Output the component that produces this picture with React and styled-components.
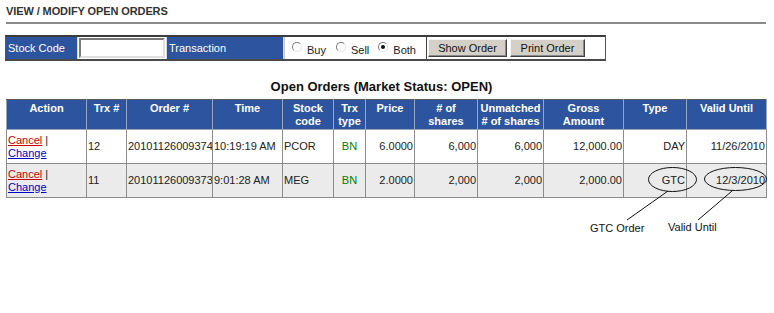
import React from "react";
import styled, { createGlobalStyle } from "styled-components";

const GlobalStyle = createGlobalStyle`
  html, body {
    margin: 0;
    padding: 0;
    background: #ffffff;
  }
  body {
    font-family: "Liberation Sans", Arial, sans-serif;
    font-size: 11px;
    color: #222;
  }
`;

const BLUE = "#2d559f";

const Page = styled.div`
  position: relative;
  width: 774px;
  height: 313px;
  padding: 5px 8px 0 5px;
  box-sizing: border-box;
`;

const PageTitle = styled.h1`
  margin: 0 0 0 1px;
  font-size: 11px;
  line-height: 13px;
  font-weight: bold;
  color: #333;
  letter-spacing: -0.1px;
`;

const Rule = styled.hr`
  margin: 4px 0 0 1px;
  height: 2px;
  border: none;
  background: #8a8a8a;
`;

const FilterBar = styled.div`
  display: flex;
  align-items: stretch;
  margin-top: 11px;
  width: 601px;
  height: 26px;
  box-sizing: border-box;
  border: 1px solid #555;
  border-top: 2px solid #3c3c3c;
  border-bottom: 2px solid #4a4a4a;
  background: #fff;
`;

const FilterLabel = styled.div`
  width: ${(p) => p.$w}px;
  background: ${BLUE};
  color: #fff;
  display: flex;
  align-items: center;
  padding-left: 2px;
  box-sizing: border-box;
  border-right: 1px solid #d8d8d8;
`;

const InputCell = styled.div`
  width: 89px;
  display: flex;
  align-items: center;
  padding: 0 1px;
  box-sizing: border-box;
  border-right: 1px solid #d8d8d8;
`;

const TextInput = styled.input`
  width: 86px;
  height: 20px;
  box-sizing: border-box;
  border: 2px solid;
  border-color: #7a7a7a #e0e0e0 #e0e0e0 #7a7a7a;
  padding: 0 2px;
  font: inherit;
  outline: none;
`;

const RadioCell = styled.div`
  width: 143px;
  display: flex;
  align-items: center;
  gap: 0;
  padding-left: 7px;
  box-sizing: border-box;
  border-left: 1px solid #c8c8c8;
  border-right: 1px solid #444;
`;

const RadioLabel = styled.label`
  display: flex;
  align-items: center;
  margin-right: ${(p) => p.$mr}px;
  color: #222;
`;

const RadioDot = styled.span`
  position: relative;
  width: 10px;
  height: 10px;
  border-radius: 50%;
  box-sizing: border-box;
  border: 1px solid;
  border-color: #7c7c7c #e4e4e4 #e4e4e4 #7c7c7c;
  background: #fff;
  margin: -3px 5px 0 0;
  &::after {
    content: "";
    display: ${(p) => (p.$checked ? "block" : "none")};
    position: absolute;
    left: 2px;
    top: 2px;
    width: 4px;
    height: 4px;
    border-radius: 50%;
    background: #111;
  }
`;

const RadioText = styled.span`
  padding-top: 4px;
`;

const ButtonCell = styled.div`
  display: flex;
  align-items: center;
  gap: 3px;
  padding-left: 1px;
`;

const ClassicButton = styled.button`
  width: ${(p) => p.$w}px;
  height: 18px;
  padding: 0;
  font: inherit;
  font-size: 11px;
  color: #111;
  background: #d4d0c8;
  border: 1px solid;
  border-color: #f4f4f4 #404040 #404040 #f4f4f4;
  box-shadow: inset -1px -1px 0 #8a8a8a;
`;

const SectionTitle = styled.h2`
  margin: 18px 0 0 0;
  padding-right: 8px;
  text-align: center;
  font-size: 13px;
  line-height: 16px;
  font-weight: bold;
  color: #111;
`;

const Grid = styled.table`
  margin: 4px 0 0 1px;
  width: 760px;
  border-collapse: collapse;
  table-layout: fixed;
  border: 1px solid #5a5a5a;
`;

const Head = styled.th`
  background: ${BLUE};
  color: #fff;
  font-weight: bold;
  font-size: 11px;
  line-height: 13px;
  vertical-align: top;
  text-align: center;
  padding: 2px 1px 0;
  height: 27px;
  border: 1px solid #9aa5b8;
  border-top-color: #5a5a5a;
`;

const Cell = styled.td`
  height: 33px;
  padding: 0 1px;
  text-align: ${(p) => p.$align || "left"};
  color: ${(p) => p.$color || "#222"};
  vertical-align: middle;
  white-space: nowrap;
  overflow: hidden;
  line-height: 13px;
  border: 1px solid #8c8c8c;
`;

const Row = styled.tr`
  background: ${(p) => (p.$shade ? "#ebebeb" : "#ffffff")};
`;

const CancelLink = styled.a`
  color: #cc0000;
  text-decoration: underline;
`;

const ChangeLink = styled.a`
  color: #0000cc;
  text-decoration: underline;
`;

const Overlay = styled.svg`
  position: absolute;
  left: 0;
  top: 0;
  pointer-events: none;
`;

const Callout = styled.span`
  position: absolute;
  left: ${(p) => p.$x}px;
  top: ${(p) => p.$y}px;
  font-size: 11px;
  color: #111;
`;

const columns = [
  { w: 80, label: ["Action"] },
  { w: 40, label: ["Trx #"] },
  { w: 86, label: ["Order #"] },
  { w: 70, label: ["Time"] },
  { w: 51, label: ["Stock", "code"] },
  { w: 32, label: ["Trx", "type"] },
  { w: 49, label: ["Price"] },
  { w: 63, label: ["# of", "shares"] },
  { w: 66, label: ["Unmatched", "# of shares"] },
  { w: 80, label: ["Gross", "Amount"] },
  { w: 63, label: ["Type"] },
  { w: 80, label: ["Valid Until"] },
];

const orders = [
  {
    trx: "12",
    order: "20101126009374",
    time: "10:19:19 AM",
    code: "PCOR",
    type: "BN",
    price: "6.0000",
    shares: "6,000",
    unmatched: "6,000",
    gross: "12,000.00",
    kind: "DAY",
    valid: "11/26/2010",
  },
  {
    trx: "11",
    order: "20101126009373",
    time: "9:01:28 AM",
    code: "MEG",
    type: "BN",
    price: "2.0000",
    shares: "2,000",
    unmatched: "2,000",
    gross: "2,000.00",
    kind: "GTC",
    valid: "12/3/2010",
  },
];

export default function App() {
  return (
    <>
      <GlobalStyle />
      <Page>
        <PageTitle>VIEW / MODIFY OPEN ORDERS</PageTitle>
        <Rule />

        <FilterBar>
          <FilterLabel $w={72}>Stock Code</FilterLabel>
          <InputCell>
            <TextInput type="text" />
          </InputCell>
          <FilterLabel $w={117}>Transaction</FilterLabel>
          <RadioCell>
            <RadioLabel $mr={10}>
              <RadioDot />
              <RadioText>Buy</RadioText>
            </RadioLabel>
            <RadioLabel $mr={9}>
              <RadioDot />
              <RadioText>Sell</RadioText>
            </RadioLabel>
            <RadioLabel $mr={0}>
              <RadioDot $checked />
              <RadioText>Both</RadioText>
            </RadioLabel>
          </RadioCell>
          <ButtonCell>
            <ClassicButton $w={79}>Show Order</ClassicButton>
            <ClassicButton $w={75}>Print Order</ClassicButton>
          </ButtonCell>
        </FilterBar>

        <SectionTitle>Open Orders (Market Status: OPEN)</SectionTitle>

        <Grid>
          <colgroup>
            {columns.map((c, i) => (
              <col key={i} style={{ width: c.w }} />
            ))}
          </colgroup>
          <thead>
            <tr>
              {columns.map((c, i) => (
                <Head key={i}>
                  {c.label.map((l, j) => (
                    <React.Fragment key={j}>
                      {j > 0 && <br />}
                      {l}
                    </React.Fragment>
                  ))}
                </Head>
              ))}
            </tr>
          </thead>
          <tbody>
            {orders.map((o, i) => (
              <Row key={o.order} $shade={i % 2 === 1}>
                <Cell>
                  <CancelLink>Cancel</CancelLink> |<br />
                  <ChangeLink>Change</ChangeLink>
                </Cell>
                <Cell>{o.trx}</Cell>
                <Cell>{o.order}</Cell>
                <Cell>{o.time}</Cell>
                <Cell>{o.code}</Cell>
                <Cell $align="center" $color="#008000">
                  {o.type}
                </Cell>
                <Cell $align="right">{o.price}</Cell>
                <Cell $align="right">{o.shares}</Cell>
                <Cell $align="right">{o.unmatched}</Cell>
                <Cell $align="right">{o.gross}</Cell>
                <Cell $align="right">{o.kind}</Cell>
                <Cell $align="right">{o.valid}</Cell>
              </Row>
            ))}
          </tbody>
        </Grid>

        <Overlay width="774" height="313" viewBox="0 0 774 313">
          <ellipse cx="672.5" cy="179.5" rx="24" ry="12" fill="none" stroke="#111" strokeWidth="1" />
          <ellipse cx="735.5" cy="179" rx="31" ry="11.5" fill="none" stroke="#111" strokeWidth="1" />
          <line x1="668" y1="191" x2="627" y2="220" stroke="#111" strokeWidth="1" />
          <line x1="732" y1="191" x2="698" y2="220" stroke="#111" strokeWidth="1" />
        </Overlay>
        <Callout $x={590} $y={222}>GTC Order</Callout>
        <Callout $x={668} $y={221}>Valid Until</Callout>
      </Page>
    </>
  );
}
